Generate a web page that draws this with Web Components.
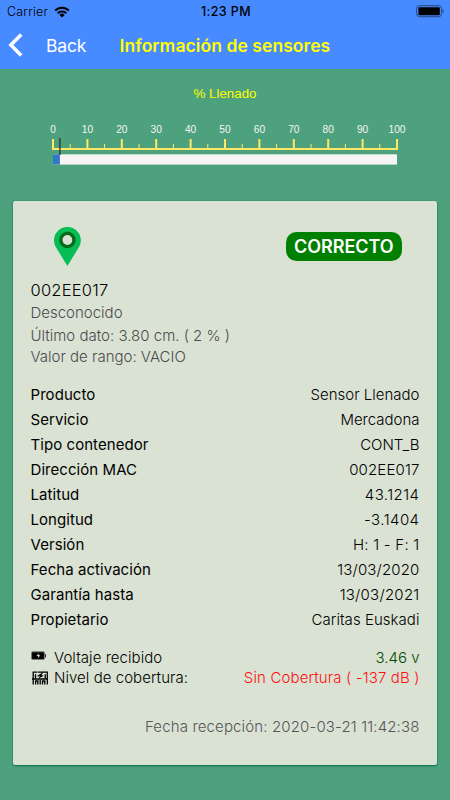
<!DOCTYPE html>
<html lang="es">
<head>
<meta charset="utf-8">
<title>Información de sensores</title>
<style>
    body {
        margin: 0;
        width: 450px;
        height: 800px;
        overflow: hidden;
        background: #4ea17d;
        font-family: Inter, "Liberation Sans", sans-serif;
        color: #000;
    }
</style>
</head>
<body>
<sensor-page>
    <status-bar slot="header" carrier="Carrier" time="1:23 PM"></status-bar>
    <nav-bar slot="header" back="Back">Información de sensores</nav-bar>
    <fill-gauge value="2">% Llenado</fill-gauge>
    <sensor-card>
        <status-badge slot="status">CORRECTO</status-badge>
        <span slot="name">002EE017</span>
        <span slot="place">Desconocido</span>
        <span slot="last">Último dato: 3.80 cm. ( 2 % )</span>
        <span slot="range">Valor de rango: VACIO</span>
        <data-row label="Producto">Sensor Llenado</data-row>
        <data-row label="Servicio">Mercadona</data-row>
        <data-row label="Tipo contenedor">CONT_B</data-row>
        <data-row label="Dirección MAC" style="--tracking: 0.15px">002EE017</data-row>
        <data-row label="Latitud" style="--tracking: 0.45px">43.1214</data-row>
        <data-row label="Longitud" style="--tracking: 0.45px">-3.1404</data-row>
        <data-row label="Versión" style="--tracking: 0.25px">H: 1 - F: 1</data-row>
        <data-row label="Fecha activación" style="--tracking: 0.15px">13/03/2020</data-row>
        <data-row label="Garantía hasta" style="--tracking: 0.25px">13/03/2021</data-row>
        <data-row label="Propietario" style="--tracking: 0.05px">Caritas Euskadi</data-row>
        <signal-row slot="signals" icon="battery" label="Voltaje recibido" style="--value-color: #004b00">3.46 v</signal-row>
        <signal-row slot="signals" icon="coverage" label="Nivel de cobertura:" style="--value-color: #ff1010; --tracking: 0.13px">Sin Cobertura ( -137 dB )</signal-row>
        <span slot="footer">Fecha recepción: 2020-03-21 11:42:38</span>
    </sensor-card>
</sensor-page>

<script>
class SensorPage extends HTMLElement {
    constructor() {
        super();
        this.attachShadow({ mode: "open" }).innerHTML = `
        <style>
            :host { display: block; }
            header { background: #488aff; height: 69px; }
            main { display: flex; flex-direction: column; }
        </style>
        <header><slot name="header"></slot></header>
        <main><slot></slot></main>
        `;
    }
}

class StatusBar extends HTMLElement {
    constructor() {
        super();
        this.attachShadow({ mode: "open" }).innerHTML = `
        <style>
            :host {
                display: grid;
                grid-template-columns: 1fr auto 1fr;
                align-items: center;
                height: 23px;
                padding: 0 6px 0 7px;
                font-size: 12.5px;
                line-height: 23px;
            }
            .left { display: flex; align-items: center; gap: 6px; }
            .carrier { letter-spacing: 0.2px; font-weight: 300; }
            .time { font-weight: 500; letter-spacing: 0.4px; margin-left: 1px; }
            .battery { justify-self: end; }
            svg { display: block; }
        </style>
        <div class="left">
            <span class="carrier">${this.getAttribute("carrier")}</span>
            <svg width="16" height="12" viewBox="0 0 16 12">
                <g fill="none" stroke="#000" stroke-width="2">
                    <path d="M1.2 4.5a9.6 9.6 0 0 1 13.6 0"/>
                    <path d="M3.7 7.2a6.1 6.1 0 0 1 8.6 0"/>
                </g>
                <path d="M5.4 8.9a3.7 3.7 0 0 1 5.2 0L8 11.5z"/>
            </svg>
        </div>
        <span class="time">${this.getAttribute("time")}</span>
        <svg class="battery" width="28" height="13" viewBox="0 0 28 13">
            <rect x=".6" y=".7" width="25" height="11" rx="3" fill="none" stroke="#24457f" stroke-width="1"/>
            <rect x="2.4" y="2.2" width="21.4" height="8" rx="1"/>
            <path d="M26.7 4.4c1.4.6 1.4 3.2 0 3.8z" fill="#24457f"/>
        </svg>
        `;
    }
}

class NavBar extends HTMLElement {
    constructor() {
        super();
        this.attachShadow({ mode: "open" }).innerHTML = `
        <style>
            :host { display: flex; align-items: center; height: 44px; padding-left: 8px; }
            svg { display: block; }
            .back { color: #fff; font-size: 17.5px; margin-left: 22px; width: 73.5px; letter-spacing: -0.2px; }
            .title { color: #ff0; font-size: 17.5px; font-weight: 600; letter-spacing: 0.07px; white-space: nowrap; }
        </style>
        <svg width="16" height="24" viewBox="0 0 16 24"><path d="M13.2 1.5 2.9 12l10.3 10.500" fill="none" stroke="#fff" stroke-width="3.500"/></svg>
        <span class="back">${this.getAttribute("back")}</span>
        <span class="title"><slot></slot></span>
        `;
    }
}

class FillGauge extends HTMLElement {
    constructor() {
        super();
        const value = Number(this.getAttribute("value"));
        const start = 13;
        const step = 3.44;
        let ticks = "";
        for (let i = 0; i <= 100; i += 5) {
            const x = start + i * step;
            if (i % 10 == 0) {
                ticks += `<rect x="${x - 1}" y="14" width="2" height="11"/>`;
                ticks += `<text x="${x}" y="8.3">${i}</text>`;
            } else {
                ticks += `<rect x="${x - 0.5}" y="19" width="1" height="5"/>`;
            }
        }
        const mark = start + value * step;
        this.attachShadow({ mode: "open" }).innerHTML = `
        <style>
            :host {
                display: flex;
                flex-direction: column;
                align-items: center;
                height: 132px;
                font-family: "Liberation Sans", Arial, sans-serif;
            }
            .title { color: #ff0; font-size: 13.3px; line-height: 16px; margin-top: 17px; }
            svg { display: block; margin-top: 23px; }
            text { fill: #f5f5f5; font-size: 10.2px; text-anchor: middle; }
        </style>
        <div class="title"><slot></slot></div>
        <svg width="370" height="42" viewBox="0 0 370 42">
            <g fill="#ffe866">
                <rect x="${start - 1}" y="23" width="346" height="2"/>
                ${ticks}
            </g>
            <rect x="${start}" y="29.3" width="344" height="10.300" fill="#f5f5f5"/>
            <rect x="${start}" y="29.3" width="${value * step}" height="10.300" fill="#2f79c6"/>
            <rect x="${mark - 0.9}" y="13" width="1.8" height="17" fill="#333" fill-opacity=".75"/>
        </svg>
        `;
    }
}

class StatusBadge extends HTMLElement {
    constructor() {
        super();
        this.attachShadow({ mode: "open" }).innerHTML = `
        <style>
            :host {
                display: flex;
                align-items: center;
                justify-content: center;
                width: 116.5px;
                height: 29px;
                border-radius: 10.5px;
                background: #008000;
                color: #fff;
                font-size: 18px;
                font-weight: 600;
                letter-spacing: -0.05px;
            }
        </style>
        <slot></slot>
        `;
    }
}

class SensorCard extends HTMLElement {
    constructor() {
        super();
        this.attachShadow({ mode: "open" }).innerHTML = `
        <style>
            :host {
                display: block;
                box-sizing: border-box;
                width: 424px;
                height: 564px;
                margin-left: 13px;
                padding: 26px 17.5px 0;
                border-radius: 2px;
                background: #dae2d3;
                box-shadow: 0 1px 2px #00714a, 0 0 1px #00714a;
                font-size: 15px;
                font-weight: 300;
            }
            .top { display: flex; justify-content: space-between; height: 52px; padding: 0 17.5px 0 22.5px; }
            .top slot { display: block; margin-top: 5px; }
            .top svg { display: block; }
            .info { color: #4b4b4f; }
            .info div { white-space: pre; }
            .name { color: #000; font-size: 16.5px; line-height: 23px; font-weight: 350; letter-spacing: 0.22px; }
            .place { line-height: 22px; }
            .last { line-height: 23px; }
            .range { line-height: 19px; }
            .rows { margin-top: 16px; }
            .signals { margin-top: 15.5px; }
            .footer { margin-top: 28px; line-height: 20px; text-align: right; color: #55555a; letter-spacing: 0.14px; }
        </style>
        <div class="top">
            <svg width="29" height="40" viewBox="0 0 29 40">
                <path d="M14.4 39 2.8 20A13.400 13.400 0 1 1 26 20z" fill="#04be55"/>
                <circle cx="14.400" cy="13" r="6.600" fill="#dae2d3" stroke="#066b19" stroke-width="3.400"/>
            </svg>
            <slot name="status"></slot>
        </div>
        <div class="info">
            <div class="name"><slot name="name"></slot></div>
            <div class="place"><slot name="place"></slot></div>
            <div class="last"><slot name="last"></slot></div>
            <div class="range"><slot name="range"></slot></div>
        </div>
        <div class="rows"><slot></slot></div>
        <div class="signals"><slot name="signals"></slot></div>
        <div class="footer"><slot name="footer"></slot></div>
        `;
    }
}

class DataRow extends HTMLElement {
    constructor() {
        super();
        this.attachShadow({ mode: "open" }).innerHTML = `
        <style>
            :host { display: flex; justify-content: space-between; line-height: 25px; }
            .label { font-weight: 400; letter-spacing: 0.06px; }
            .value { letter-spacing: var(--tracking, 0); }
        </style>
        <span class="label">${this.getAttribute("label")}</span>
        <span class="value"><slot></slot></span>
        `;
    }
}

const signalIcons = {
    battery: `
        <rect x=".6" y="1.800" width="12.800" height="7.600" rx="1" fill="#000" stroke="#777c74" stroke-width="1"/>
        <rect x="14" y="4" width="1" height="3.500" fill="#333"/>
        <path d="M8 3.300 5.400 6h1.800l-.5 2.200 2.700-3H7.600z" fill="#dae2d3"/>`,
    coverage: `
        <g fill="none" stroke="#000" stroke-width="1.300">
            <path d="M2.200 13.500V1.200h4.200M16.300 13.500V1.200h-4.200M4.500 3.200v4.300M14.200 3.200v4.300"/>
            <path d="M1 8h16M4.600 13.500V10h2.300v3.500M9.200 13.500V9M11.500 13.500V10h2.300v3.500"/>
            <path d="M7 1.200h5.500M6.700 5.300 10.500 3 9 6l3-1.500"/>
        </g>`,
};

class SignalRow extends HTMLElement {
    constructor() {
        super();
        this.attachShadow({ mode: "open" }).innerHTML = `
        <style>
            :host { display: flex; align-items: center; line-height: 20.5px; }
            svg { display: block; width: 18px; height: 15px; margin-right: 5.5px; flex: none; }
            .label { letter-spacing: 0.05px; }
            .value { margin-left: auto; color: var(--value-color, #000); letter-spacing: var(--tracking, 0); }
        </style>
        <svg viewBox="0 0 18 15">${signalIcons[this.getAttribute("icon")]}</svg>
        <span class="label">${this.getAttribute("label")}</span>
        <span class="value"><slot></slot></span>
        `;
    }
}

customElements.define("sensor-page", SensorPage);
customElements.define("status-bar", StatusBar);
customElements.define("nav-bar", NavBar);
customElements.define("fill-gauge", FillGauge);
customElements.define("status-badge", StatusBadge);
customElements.define("sensor-card", SensorCard);
customElements.define("data-row", DataRow);
customElements.define("signal-row", SignalRow);
</script>
</body>
</html>
